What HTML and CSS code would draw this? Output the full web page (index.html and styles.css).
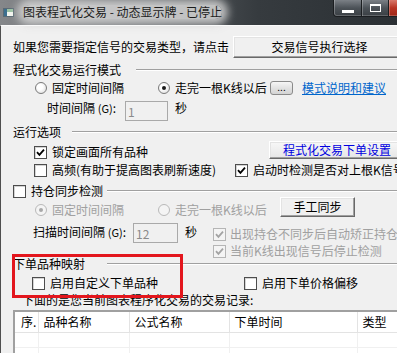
FILE: index.html
```html
<!DOCTYPE html>
<html lang="zh-CN">
<head>
  <meta charset="UTF-8">
  <meta name="viewport" content="width=device-width, initial-scale=1.0">
  <title>图表程式化交易 - 动态显示牌</title>
  <link rel="stylesheet" href="styles.css">
</head>
<body>
  <div class="titlebar">
    <svg class="app-icon" viewBox="0 0 11 9">
      <rect x="0.5" y="0.5" width="10" height="8" fill="#e8eef2" stroke="#5a6a74"/>
      <rect x="1" y="1" width="3" height="7" fill="#3c6f8f"/>
      <rect x="4" y="1" width="6" height="3" fill="#9cc3a4"/>
      <rect x="4" y="4" width="6" height="4" fill="#f4f6f0"/>
    </svg>
    <span class="title">图表程式化交易 - 动态显示牌 - 已停止</span>
    <div class="caption-btns">
      <span class="cap cap-min"><i></i></span>
      <span class="cap cap-max"><i></i></span>
      <span class="cap cap-close"></span>
    </div>
  </div>

  <div class="client">
    <div class="row row-ask">
      <span class="ask-text">如果您需要指定信号的交易类型，请点击</span>
      <button class="btn btn-signal">交易信号执行选择</button>
    </div>

    <div class="group-head gh-mode"><span>程式化交易运行模式</span><i class="etch"></i></div>

    <div class="row row-mode">
      <label class="opt w-fixed"><span class="radio"></span>固定时间间隔</label>
      <label class="opt w-bar"><span class="radio on"></span>走完一根K线以后</label>
      <button class="btn-dots">...</button>
      <a class="link" href="#">模式说明和建议</a>
    </div>

    <div class="row row-interval">
      <span class="field-label fl-interval">时间间隔 <small>(G)</small>:</span>
      <input class="edit edit-interval" type="text" value="1" disabled>
      <span class="unit">秒</span>
    </div>

    <div class="group-head gh-run"><span>运行选项</span><i class="etch"></i></div>

    <div class="row row-lock">
      <label class="opt w-lock"><span class="cb"><svg viewBox="0 0 9 9"><path d="M1 4.2 L3.4 6.8 L8 1.6"/></svg></span>锁定画面所有品种</label>
      <button class="btn btn-order">程式化交易下单设置</button>
    </div>

    <div class="row row-hf">
      <label class="opt w-hf"><span class="cb"></span>高频(有助于提高图表刷新速度)</label>
      <label class="opt"><span class="cb"><svg viewBox="0 0 9 9"><path d="M1 4.2 L3.4 6.8 L8 1.6"/></svg></span>启动时检测是否对上根K信号</label>
    </div>

    <div class="group-head gh-sync">
      <label class="opt"><span class="cb"></span>持仓同步检测</label><i class="etch"></i>
    </div>

    <div class="row row-syncmode">
      <label class="opt dis w-fixed"><span class="radio on"></span>固定时间间隔</label>
      <label class="opt dis w-bar2"><span class="radio"></span>走完一根K线以后</label>
      <button class="btn btn-sync">手工同步</button>
    </div>

    <div class="row row-scan">
      <span class="field-label fl-scan">扫描时间间隔 <small>(G)</small>:</span>
      <input class="edit edit-scan" type="text" value="12" disabled>
      <span class="unit unit-scan">秒</span>
      <div class="sync-checks">
        <label class="opt dis"><span class="cb"><svg viewBox="0 0 9 9"><path d="M1 4.2 L3.4 6.8 L8 1.6"/></svg></span>出现持仓不同步后自动矫正持仓</label>
        <label class="opt dis"><span class="cb"><svg viewBox="0 0 9 9"><path d="M1 4.2 L3.4 6.8 L8 1.6"/></svg></span>当前K线出现信号后停止检测</label>
      </div>
    </div>

    <div class="group-head gh-map"><span>下单品种映射</span><i class="etch"></i></div>

    <div class="row row-map">
      <label class="opt w-custom"><span class="cb"></span>启用自定义下单品种</label>
      <label class="opt"><span class="cb"></span>启用下单价格偏移</label>
    </div>

    <div class="notice">下面的是您当前图表程序化交易的交易记录:</div>

    <div class="records">
      <table>
        <colgroup>
          <col class="c-no"><col class="c-sym"><col class="c-formula"><col class="c-time"><col class="c-type">
        </colgroup>
        <thead>
          <tr>
            <th class="th-no">序.</th>
            <th>品种名称</th>
            <th>公式名称</th>
            <th>下单时间</th>
            <th>类型</th>
          </tr>
        </thead>
        <tbody>
          <tr><td></td><td></td><td></td><td></td><td></td></tr>
          <tr><td></td><td></td><td></td><td></td><td></td></tr>
        </tbody>
      </table>
    </div>

    <div class="highlight"></div>
  </div>
</body>
</html>
```
FILE: styles.css
```css
html, body { margin: 0; overflow: hidden; }
body {
  width: 397px; height: 353px;
  background: #f0f0f0;
  font-family: "Noto Sans CJK SC", "Noto Sans", sans-serif;
  font-size: 12px; line-height: 14px; color: #000;
}

/* title bar */
.titlebar {
  height: 25px; display: flex; align-items: flex-start;
  background: linear-gradient(to right, #85878a 0%, #5d6165 35%, #363b3f 65%, #2b3034 100%);
}
.app-icon { width: 11px; height: 9px; margin: 8px 0 0 3px; flex: none; }
.title {
  margin: 5px 0 0 9px; flex: none; color: #1c1c1c; white-space: nowrap;
  background: rgba(214, 214, 214, 0.85); border-radius: 8px;
  box-shadow: 0 0 8px 6px rgba(214, 214, 214, 0.85);
}
.caption-btns { margin-left: auto; display: flex; height: 17px; flex: none; }
.cap {
  height: 17px; box-sizing: border-box; display: flex; align-items: center; justify-content: center;
  border: 1px solid #1b1e21; border-top: none; border-left: none;
  background: linear-gradient(#7b8086, #4c5258 50%, #3a3f44);
  box-shadow: inset 1px 0 rgba(255,255,255,.25), inset 0 -1px rgba(255,255,255,.2);
}
.cap-min { width: 29px; border-left: 1px solid #1b1e21; border-bottom-left-radius: 4px; }
.cap-min i { width: 12px; height: 3px; background: #fff; margin-top: 7px; }
.cap-max { width: 27px; }
.cap-max i { width: 9px; height: 5px; border: 1px solid #fff; border-top-width: 2px; }
.cap-close { width: 8px; border-right: none; background: linear-gradient(#d8786a, #b83322 50%, #9c2616); }

/* dialog client */
.client {
  position: relative; height: 327px;
  border-top: 1px solid #fafafa; border-left: 1px solid #4f4f4f;
  padding-left: 12px;
}
.row { display: flex; align-items: flex-start; }
.opt { display: flex; align-items: center; height: 14px; flex: none; white-space: nowrap; }
.dis { color: #a0a0a0; }

.btn {
  font: inherit; line-height: 14px; padding: 0; flex: none; color: #000;
  background: #f0f0f0; box-sizing: border-box;
  border: 1px solid; border-color: #fff #696969 #696969 #fff;
  box-shadow: inset -1px -1px #a0a0a0, inset 1px 1px #e3e3e3;
}

.row-ask { margin-top: 10px; height: 22px; align-items: center; }
.ask-text { width: 220px; flex: none; white-space: nowrap; }
.btn-signal { width: 173px; height: 22px; }

.group-head { display: flex; align-items: center; height: 14px; }
.group-head span { flex: none; }
.etch { flex: 1; height: 0; border-top: 1px solid #a0a0a0; border-bottom: 1px solid #fff; }
.gh-mode { margin-top: 5px; }
.gh-mode .etch { margin-left: 15px; }
.gh-run { margin-top: 4px; }
.gh-run .etch { margin-left: 11px; }
.gh-sync { margin-top: 7px; }
.gh-sync .etch { margin-left: 4px; }
.gh-map { margin-top: -1px; }
.gh-map .etch { margin-left: 22px; }

.radio {
  width: 12px; height: 12px; border-radius: 50%; box-sizing: border-box; flex: none;
  border: 1px solid #7a7a7a; margin-right: 5px; position: relative;
  background: radial-gradient(circle at 40% 40%, #fff 30%, #d6d6d6);
}
.radio.on::after {
  content: ""; position: absolute; left: 3px; top: 3px;
  width: 4px; height: 4px; border-radius: 50%; background: #1a1a1a;
}
.dis .radio { border-color: #b9b9b9; background: #f4f4f4; }
.dis .radio.on::after { background: #a8a8a8; }

.cb {
  width: 13px; height: 13px; box-sizing: border-box; flex: none; margin-right: 5px;
  border: 1px solid #4d4d4d; background: #fff; box-shadow: inset 1px 1px #d4d4d4;
  display: flex; align-items: center; justify-content: center;
}
.cb svg { width: 9px; height: 9px; }
.cb path { fill: none; stroke: #000; stroke-width: 1.8; }
.dis .cb { border-color: #b5b5b5; background: #f4f4f4; box-shadow: none; }
.dis .cb path { stroke: #a3a3a3; }

.row-mode { margin-top: 4px; height: 14px; padding-left: 22px; }
.w-fixed { width: 123px; }
.w-bar { width: 112px; }
.btn-dots {
  font: inherit; font-size: 10px; line-height: 10px; padding: 0 0 3px; flex: none;
  width: 23px; height: 14px; box-sizing: border-box;
  border: 1px solid #8a8a8a; border-radius: 3px;
  background: linear-gradient(#f6f6f6, #e2e2e2 50%, #d4d4d4);
}
.link { margin-left: 9px; color: #0066cc; text-decoration: underline; white-space: nowrap; }

.field-label { flex: none; white-space: nowrap; }
.field-label small { font-size: 11px; }
.edit {
  font: inherit; line-height: 14px; flex: none; box-sizing: border-box;
  height: 20px; padding: 1px 2px 0; color: #8a8a8a;
  background: #f0f0f0; border: 1px solid #a9a9a9;
}
.unit { flex: none; margin-left: 7px; }

.row-interval { margin-top: 6px; height: 20px; padding-left: 34px; }
.fl-interval { width: 78px; }
.edit-interval { width: 43px; }

.row-lock { margin-top: 2px; height: 18px; padding-left: 21px; }
.w-lock { width: 235px; margin-top: 4px; }
.btn-order { width: 136px; height: 18px; color: #0000e0; background: linear-gradient(#f7f7f7, #e6e6e6); }

.row-hf { margin-top: 4px; height: 14px; padding-left: 21px; }
.w-hf { width: 201px; }

.row-syncmode { margin-top: -1px; height: 20px; padding-left: 22px; }
.row-syncmode .opt { margin-top: 6px; }
.w-bar2 { width: 122px; }
.btn-sync { width: 75px; height: 20px; }

.row-scan { margin-top: 6px; height: 35px; padding-left: 20px; }
.fl-scan { width: 100px; margin-top: 2px; }
.edit-scan { width: 45px; height: 20px; }
.unit-scan { width: 28px; margin-top: 2px; }
.sync-checks { display: flex; flex-direction: column; gap: 3px; margin-top: 4px; }
.sync-checks .cb { margin-right: 4px; }

.row-map { margin-top: 5px; height: 14px; padding-left: 19px; }
.w-custom { width: 212px; }

.notice { margin-top: 3px; padding-left: 9px; white-space: nowrap; }

.records {
  margin-top: 3px; width: 420px; height: 60px; background: #fff;
  border-top: 2px solid #a0a0a0; border-left: 2px solid #a0a0a0;
}
.records table { border-collapse: collapse; table-layout: fixed; width: 402px; }
.records th {
  height: 20px; padding: 0 0 0 5px; font-weight: normal; text-align: left;
  border-right: 1px solid #e3e3e3; border-bottom: 1px solid #e3e3e3;
  white-space: nowrap; overflow: hidden;
}
.records th.th-no { padding-left: 6px; }
.records td { height: 14px; padding: 0; border-right: 1px solid #f0f0f0; border-bottom: 1px solid #f0f0f0; }
.c-no { width: 23px; }
.c-sym { width: 91px; }
.c-formula { width: 100px; }
.c-time { width: 128px; }
.c-type { width: 60px; }

/* red annotation frame drawn over the dialog */
.highlight {
  position: absolute; left: 11px; top: 228px; width: 171px; height: 44px;
  box-sizing: border-box; border: 3px solid #e3161d;
}
```
